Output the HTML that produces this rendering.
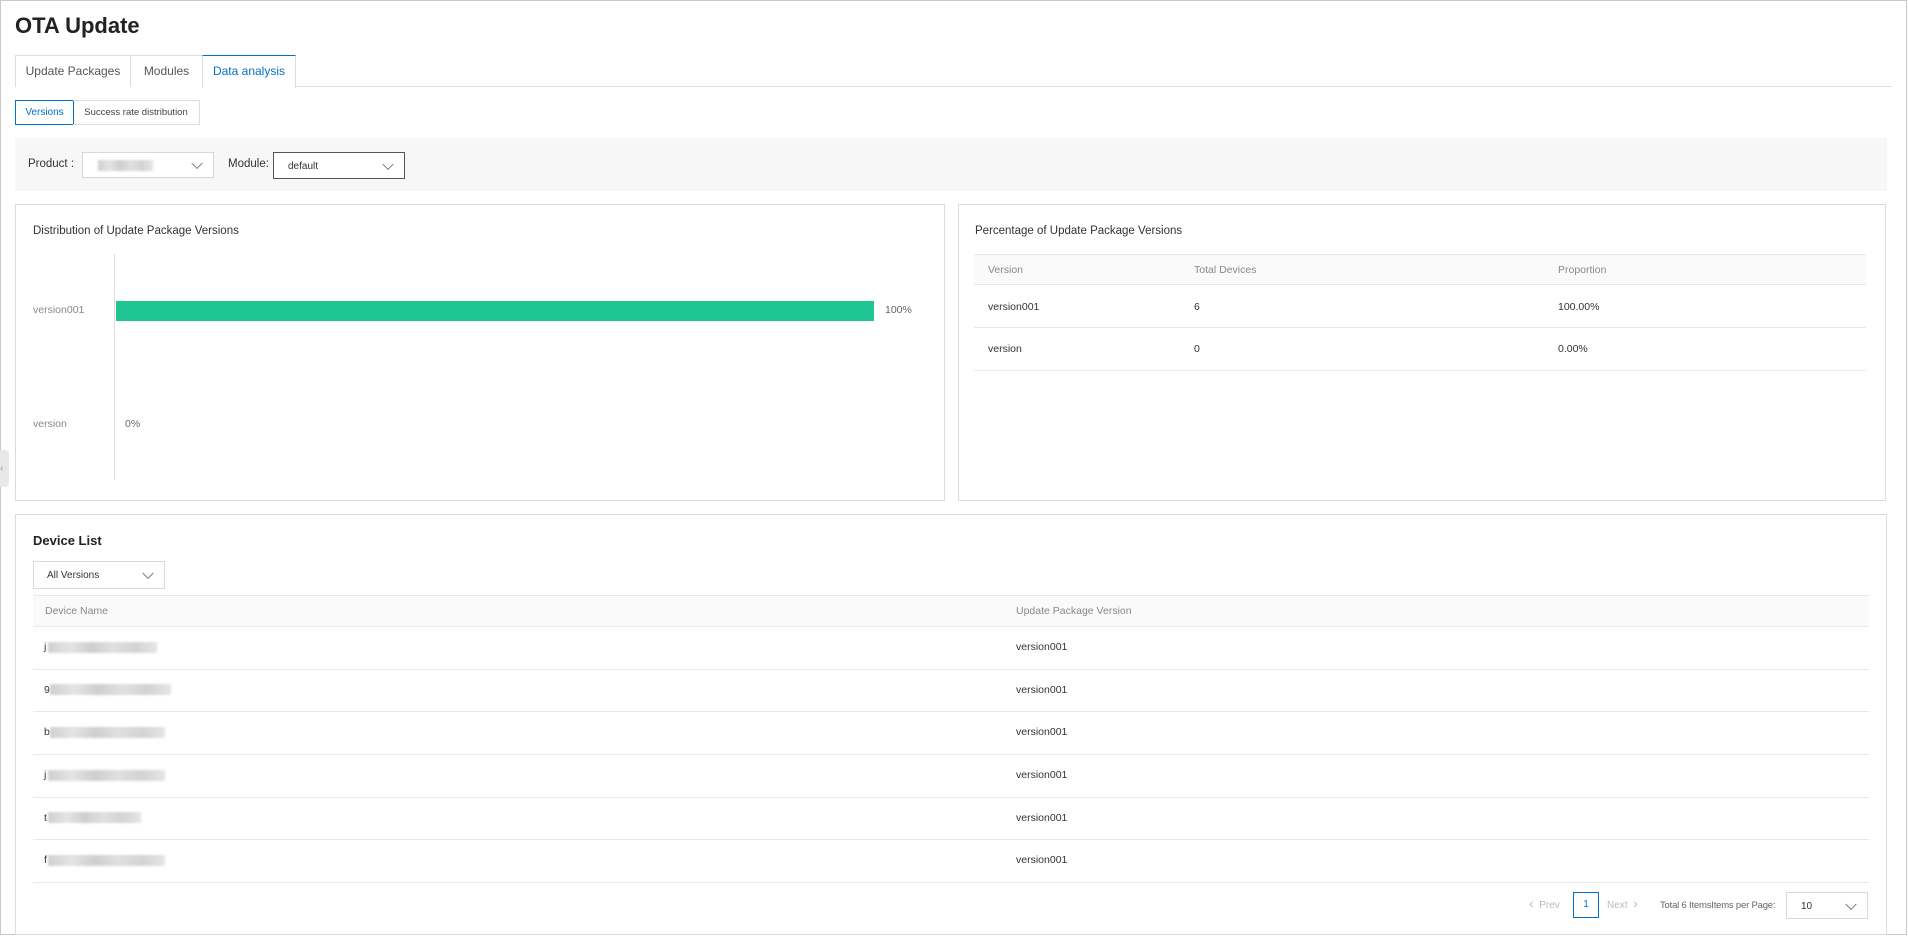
<!DOCTYPE html>
<html><head><meta charset="utf-8"><style>
*{box-sizing:border-box;margin:0;padding:0}
body{width:1908px;height:936px;background:#fff;font-family:"Liberation Sans",sans-serif;color:#333;position:relative;overflow:hidden;font-size:11px}
.a{position:absolute}
.outer{left:0;top:0;width:1907px;height:935px;border:1px solid #c8c8c8}
.tab{top:55px;height:32px;border:1px solid #ddd;border-bottom:none;line-height:30px;text-align:center;font-size:12px;color:#555;background:#fff}
.card{border:1px solid #dcdcdc;background:#fff}
.sel{background:#fff;border:1px solid #d9d9d9}
.chev{position:absolute;right:12px;top:50%;width:8px;height:8px;border-right:1px solid #777;border-bottom:1px solid #777;transform:translateY(-70%) rotate(45deg)}
.blur{background:linear-gradient(90deg,#d0d0d0,#e4e4e4 20%,#cfcfcf 40%,#e0e0e0 60%,#d3d3d3 80%,#e6e6e6);filter:blur(1px);height:11px}
.t{color:#666}
.s{font-size:10.5px}
</style></head><body>
<div class="a outer"></div>
<div class="a" style="left:15px;top:13px;font-size:22px;font-weight:bold;color:#222">OTA Update</div>
<div class="a" style="left:15px;top:86px;width:1877px;height:1px;background:#ddd"></div>
<div class="a tab" style="left:15px;width:116px">Update Packages</div>
<div class="a tab" style="left:130px;width:73px">Modules</div>
<div class="a tab" style="left:202px;width:94px;color:#0070cc;border-top:1px solid #0070cc;height:33px">Data analysis</div>
<div class="a" style="left:15px;top:100px;width:59px;height:25px;border:1px solid #0070cc;color:#0070cc;font-size:10px;line-height:23px;text-align:center">Versions</div>
<div class="a" style="left:73px;top:100px;width:127px;height:25px;border:1px solid #ddd;border-left:none;color:#444;font-size:9.5px;line-height:23px;text-align:center">Success rate distribution</div>
<div class="a" style="left:15px;top:138px;width:1872px;height:53px;background:#f7f7f7"></div>
<div class="a" style="left:28px;top:158px;font-size:11.5px;color:#333">Product :</div>
<div class="a sel" style="left:82px;top:152px;width:132px;height:26px"><div class="a blur" style="left:15px;top:7px;width:55px"></div><span class="chev"></span></div>
<div class="a" style="left:228px;top:158px;font-size:11.5px;color:#333">Module:</div>
<div class="a sel" style="left:273px;top:152px;width:132px;height:27px;border:1px solid #555"><span class="a" style="left:14px;top:8px;font-size:10px">default</span><span class="chev"></span></div>

<div class="a card" style="left:15px;top:204px;width:930px;height:297px"></div>
<div class="a" style="left:33px;top:225px;font-size:11.5px;color:#333">Distribution of Update Package Versions</div>
<div class="a" style="left:114px;top:254px;width:1px;height:226px;background:#ddd"></div>
<div class="a" style="left:116px;top:301px;width:758px;height:20px;background:#1fc592"></div>
<div class="a s" style="left:33px;top:304px;color:#888">version001</div>
<div class="a t s" style="left:885px;top:304px">100%</div>
<div class="a s" style="left:33px;top:418px;color:#888">version</div>
<div class="a t s" style="left:125px;top:418px">0%</div>

<div class="a card" style="left:958px;top:204px;width:928px;height:297px"></div>
<div class="a" style="left:975px;top:225px;font-size:11.5px;color:#333">Percentage of Update Package Versions</div>
<div class="a" style="left:974px;top:254px;width:892px;height:31px;background:#fafafa;border-top:1px solid #e8e8e8;border-bottom:1px solid #e8e8e8"></div>
<div class="a" style="left:974px;top:327px;width:892px;height:1px;background:#e8e8e8"></div>
<div class="a" style="left:974px;top:370px;width:892px;height:1px;background:#e8e8e8"></div>
<div class="a s" style="left:988px;top:264px;color:#888">Version</div>
<div class="a s" style="left:1194px;top:264px;color:#888">Total Devices</div>
<div class="a s" style="left:1558px;top:264px;color:#888">Proportion</div>
<div class="a s" style="left:988px;top:301px">version001</div>
<div class="a s" style="left:1194px;top:301px">6</div>
<div class="a s" style="left:1558px;top:301px">100.00%</div>
<div class="a s" style="left:988px;top:343px">version</div>
<div class="a s" style="left:1194px;top:343px">0</div>
<div class="a s" style="left:1558px;top:343px">0.00%</div>

<div class="a" style="left:0;top:450px;width:9px;height:37px;background:#e8e8e8;border-radius:0 4px 4px 0;color:#999;font-size:10px;line-height:37px">&lsaquo;</div>

<div class="a card" style="left:15px;top:514px;width:1872px;height:421px"></div>
<div class="a" style="left:33px;top:533px;font-size:13px;font-weight:bold;color:#222">Device List</div>
<div class="a sel" style="left:33px;top:561px;width:132px;height:28px"><span class="a" style="left:13px;top:8px;font-size:10px;color:#333">All Versions</span><span class="chev"></span></div>
<div class="a" style="left:33px;top:595px;width:1836px;height:32px;background:#fafafa;border-top:1px solid #e8e8e8;border-bottom:1px solid #e8e8e8"></div>
<div class="a s" style="left:45px;top:605px;color:#888">Device Name</div>
<div class="a s" style="left:1016px;top:605px;color:#888">Update Package Version</div>
<div class="a" style="left:33px;top:669px;width:1836px;height:1px;background:#e8e8e8"></div>
<div class="a" style="left:33px;top:711px;width:1836px;height:1px;background:#e8e8e8"></div>
<div class="a" style="left:33px;top:754px;width:1836px;height:1px;background:#e8e8e8"></div>
<div class="a" style="left:33px;top:797px;width:1836px;height:1px;background:#e8e8e8"></div>
<div class="a" style="left:33px;top:839px;width:1836px;height:1px;background:#e8e8e8"></div>
<div class="a" style="left:33px;top:882px;width:1836px;height:1px;background:#e8e8e8"></div>
<div class="a s" style="left:44px;top:641px">j</div><div class="a blur" style="left:48px;top:642px;width:109px"></div>
<div class="a s" style="left:44px;top:684px">9</div><div class="a blur" style="left:50px;top:684px;width:121px"></div>
<div class="a s" style="left:44px;top:726px">b</div><div class="a blur" style="left:50px;top:727px;width:115px"></div>
<div class="a s" style="left:44px;top:769px">j</div><div class="a blur" style="left:48px;top:770px;width:117px"></div>
<div class="a s" style="left:44px;top:812px">t</div><div class="a blur" style="left:48px;top:812px;width:93px"></div>
<div class="a s" style="left:44px;top:854px">f</div><div class="a blur" style="left:48px;top:855px;width:117px"></div>
<div class="a s" style="left:1016px;top:641px">version001</div>
<div class="a s" style="left:1016px;top:684px">version001</div>
<div class="a s" style="left:1016px;top:726px">version001</div>
<div class="a s" style="left:1016px;top:769px">version001</div>
<div class="a s" style="left:1016px;top:812px">version001</div>
<div class="a s" style="left:1016px;top:854px">version001</div>

<div class="a" style="left:1529px;top:898px;font-size:10px;color:#bbb"><span style="font-size:14px;line-height:10px">&lsaquo;</span>&nbsp; Prev</div>
<div class="a" style="left:1573px;top:892px;width:26px;height:26px;border:1px solid #0070cc;color:#0070cc;text-align:center;line-height:24px;font-size:10px">1</div>
<div class="a" style="left:1607px;top:898px;font-size:10px;color:#bbb">Next &nbsp;<span style="font-size:14px;line-height:10px">&rsaquo;</span></div>
<div class="a" style="left:1660px;top:900px;font-size:9.5px;color:#666;letter-spacing:-0.2px">Total 6 ItemsItems per Page:</div>
<div class="a sel" style="left:1786px;top:892px;width:82px;height:27px"><span class="a" style="left:14px;top:8px;font-size:10px">10</span><span class="chev"></span></div>
</body></html>
